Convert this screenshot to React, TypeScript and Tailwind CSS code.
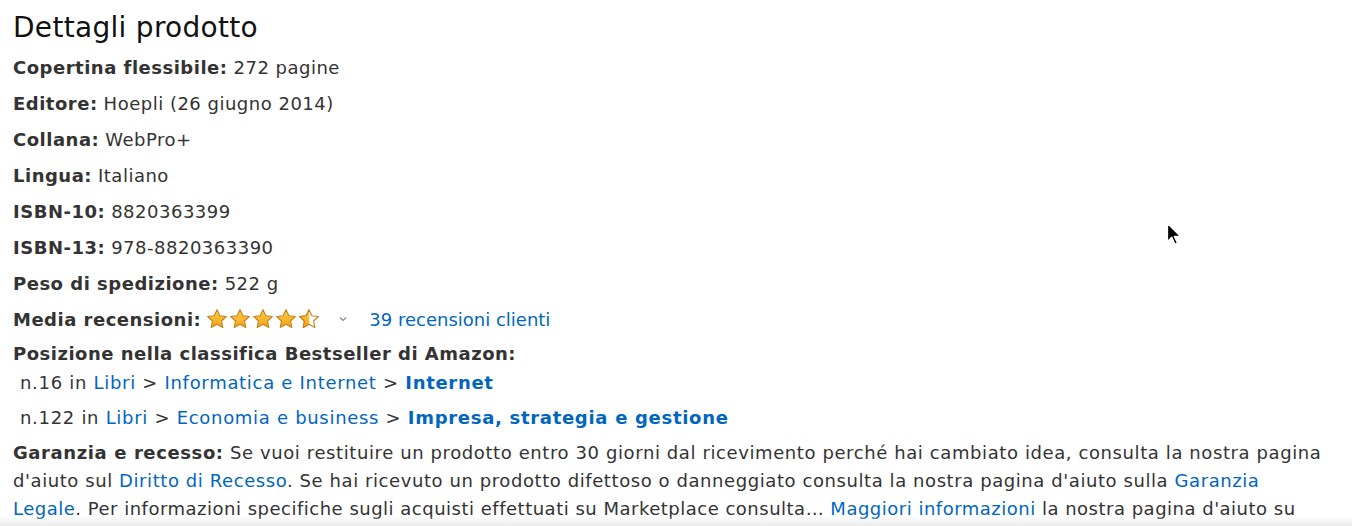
import React from "react";

const Star = ({ half = false, id }: { half?: boolean; id: string }) => (
  <svg width="22" height="22" viewBox="0 0 24 24">
    <defs>
      <linearGradient id={`g${id}`} x1="0" y1="0" x2="0" y2="1">
        <stop offset="0" stopColor="#ffd04a" />
        <stop offset="1" stopColor="#f3a01a" />
      </linearGradient>
      <clipPath id={`c${id}`}>
        <rect x="0" y="0" width="12.3" height="24" />
      </clipPath>
    </defs>
    <path
      d="M12 1.8l3.1 6.6 7.1.9-5.2 4.9 1.3 7.1L12 17.8l-6.3 3.5 1.3-7.1-5.2-4.9 7.1-.9z"
      fill={half ? "#fff" : `url(#g${id})`}
      stroke="#c4831c"
      strokeWidth="1.2"
      strokeLinejoin="round"
    />
    {half && (
      <path
        d="M12 1.8l3.1 6.6 7.1.9-5.2 4.9 1.3 7.1L12 17.8l-6.3 3.5 1.3-7.1-5.2-4.9 7.1-.9z"
        fill={`url(#g${id})`}
        stroke="#c4831c"
        strokeWidth="1.2"
        strokeLinejoin="round"
        clipPath={`url(#c${id})`}
      />
    )}
  </svg>
);

const Row = ({ label, children }: { label: string; children: React.ReactNode }) => (
  <li className="h-[36px] flex items-center whitespace-nowrap">
    <b className="font-bold mr-[6px]">{label}</b>
    {children}
  </li>
);

export default function App() {
  const link = "text-[#0066c0]";
  return (
    <div className="relative w-[1352px] h-[526px] overflow-hidden bg-white text-[#333] font-['DejaVu_Sans',Verdana,sans-serif] text-[18px] tracking-[0.5px] pl-[13px]">
      <h2 className="text-[28px] tracking-[0.3px] leading-[34px] pt-[11px] text-[#111]">Dettagli prodotto</h2>
      <ul className="mt-[4px]">
        <Row label="Copertina flessibile:">272 pagine</Row>
        <Row label="Editore:">Hoepli (26 giugno 2014)</Row>
        <Row label="Collana:">WebPro+</Row>
        <Row label="Lingua:">Italiano</Row>
        <Row label="ISBN-10:">8820363399</Row>
        <Row label="ISBN-13:">978-8820363390</Row>
        <Row label="Peso di spedizione:">522 g</Row>
        <li className="h-[36px] flex items-center whitespace-nowrap">
          <b className="font-bold mr-[5px]">Media recensioni:</b>
          <span className="flex items-center gap-[1px]">
            <Star id="1" />
            <Star id="2" />
            <Star id="3" />
            <Star id="4" />
            <Star id="5" half />
          </span>
          <svg width="10" height="10" viewBox="0 0 10 10" className="ml-[18px]">
            <path d="M2 3.5l3 3 3-3" fill="none" stroke="#888" strokeWidth="1.2" />
          </svg>
          <span className={`${link} ml-[21px] tracking-[0px]`}>39 recensioni clienti</span>
        </li>
        <li className="whitespace-nowrap tracking-[0.7px]">
          <div className="h-[32px] flex items-center tracking-[0.5px]">
            <b className="font-bold">Posizione nella classifica Bestseller di Amazon:</b>
          </div>
          <div className="pl-[7px] h-[26px] flex items-center">
            n.16 in&nbsp;<span className={link}>Libri</span>&nbsp;&gt;&nbsp;
            <span className={link}>Informatica e Internet</span>&nbsp;&gt;&nbsp;
            <b className={`${link} font-bold`}>Internet</b>
          </div>
          <div className="pl-[7px] h-[44px] flex items-center">
            n.122 in&nbsp;<span className={link}>Libri</span>&nbsp;&gt;&nbsp;
            <span className={link}>Economia e business</span>&nbsp;&gt;&nbsp;
            <b className={`${link} font-bold`}>Impresa, strategia e gestione</b>
          </div>
        </li>
        <li className="leading-[28px] whitespace-nowrap">
          <span className="tracking-[0.6px]">
            <b className="font-bold">Garanzia e recesso:</b> Se vuoi restituire un prodotto entro 30 giorni dal
            ricevimento perché hai cambiato idea, consulta la nostra pagina
          </span>
          <br />
          <span className="tracking-[0.58px]">
            d'aiuto sul <span className={link}>Diritto di Recesso</span>. Se hai ricevuto un prodotto difettoso o
            danneggiato consulta la nostra pagina d'aiuto sulla <span className={link}>Garanzia</span>
          </span>
          <br />
          <span className={link}>Legale</span>. Per informazioni specifiche sugli acquisti effettuati su Marketplace
          consulta… <span className={link}>Maggiori informazioni</span> la nostra pagina d'aiuto su
        </li>
      </ul>
      <div className="pointer-events-none absolute left-0 right-0 bottom-0 h-[10px] bg-gradient-to-b from-transparent to-[#ebebeb]" />
      <svg className="absolute left-[1166px] top-[222px]" width="16" height="26" viewBox="0 0 16 26">
        <path d="M1.5 1.5v18l4.3-4.2 3 6.8 2.6-1.1-3-6.6h6z" fill="#000" stroke="#fff" strokeWidth="1.3" strokeLinejoin="round" />
      </svg>
    </div>
  );
}
